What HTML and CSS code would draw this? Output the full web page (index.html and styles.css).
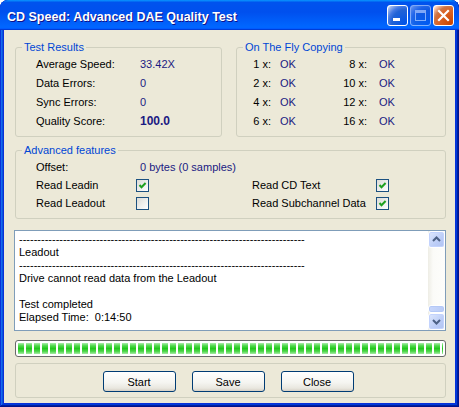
FILE: index.html
```html
<!DOCTYPE html>
<html>
<head>
<meta charset="utf-8">
<title>CD Speed: Advanced DAE Quality Test</title>
<link rel="stylesheet" href="styles.css">
</head>
<body>
<div class="window">
  <div class="titlebar">
    <span class="title">CD Speed: Advanced DAE Quality Test</span>
    <div class="tb-buttons">
      <span class="tb-btn tb-min"><span class="min-bar"></span></span>
      <span class="tb-btn tb-max"><span class="max-box"></span></span>
      <span class="tb-btn tb-close">
        <svg width="19" height="19" viewBox="0 0 19 19"><path d="M5 5 L14 14 M14 5 L5 14" stroke="#fff" stroke-width="2.2" stroke-linecap="square"/></svg>
      </span>
    </div>
  </div>
  <div class="client">
    <div class="top-groups">
      <fieldset class="group results">
        <legend>Test Results</legend>
        <div class="results-grid">
          <span>Average Speed:</span><span class="val">33.42X</span>
          <span>Data Errors:</span><span class="val">0</span>
          <span>Sync Errors:</span><span class="val">0</span>
          <span>Quality Score:</span><span class="val score">100.0</span>
        </div>
      </fieldset>
      <fieldset class="group fly">
        <legend>On The Fly Copying</legend>
        <div class="fly-grid">
          <span class="fx">1 x:</span><span class="val ok1">OK</span><span class="fx">8 x:</span><span class="val ok2">OK</span>
          <span class="fx">2 x:</span><span class="val ok1">OK</span><span class="fx">10 x:</span><span class="val ok2">OK</span>
          <span class="fx">4 x:</span><span class="val ok1">OK</span><span class="fx">12 x:</span><span class="val ok2">OK</span>
          <span class="fx">6 x:</span><span class="val ok1">OK</span><span class="fx">16 x:</span><span class="val ok2">OK</span>
        </div>
      </fieldset>
    </div>
    <fieldset class="group advanced">
      <legend>Advanced features</legend>
      <div class="adv-grid">
        <span>Offset:</span><span class="val offset">0 bytes (0 samples)</span>
        <span>Read Leadin</span>
        <span class="cb"><svg width="11" height="11" viewBox="0 0 11 11"><path d="M2.5 5 L4.5 7.2 L8.6 3" fill="none" stroke="#21a121" stroke-width="2"/></svg></span>
        <span>Read CD Text</span>
        <span class="cb"><svg width="11" height="11" viewBox="0 0 11 11"><path d="M2.5 5 L4.5 7.2 L8.6 3" fill="none" stroke="#21a121" stroke-width="2"/></svg></span>
        <span>Read Leadout</span>
        <span class="cb"></span>
        <span>Read Subchannel Data</span>
        <span class="cb"><svg width="11" height="11" viewBox="0 0 11 11"><path d="M2.5 5 L4.5 7.2 L8.6 3" fill="none" stroke="#21a121" stroke-width="2"/></svg></span>
      </div>
    </fieldset>
    <div class="log">
      <div class="log-text">
        <div class="line">------------------------------------------------------------------------------</div>
        <div class="line">Leadout</div>
        <div class="line">------------------------------------------------------------------------------</div>
        <div class="line">Drive cannot read data from the Leadout</div>
        <div class="line">&nbsp;</div>
        <div class="line">Test completed</div>
        <div class="line">Elapsed Time:  0:14:50</div>
      </div>
      <div class="scrollbar">
        <span class="sb-btn"><svg width="15" height="15" viewBox="0 0 15 15"><path d="M4 9 L7.5 5.5 L11 9" fill="none" stroke="#4d6185" stroke-width="2"/></svg></span>
        <span class="sb-track"><span class="sb-thumb"></span></span>
        <span class="sb-btn"><svg width="15" height="15" viewBox="0 0 15 15"><path d="M4 6 L7.5 9.5 L11 6" fill="none" stroke="#4d6185" stroke-width="2"/></svg></span>
      </div>
    </div>
    <div class="progress"><div class="progress-fill"></div></div>
    <div class="actions">
      <button class="btn">Start</button>
      <button class="btn">Save</button>
      <button class="btn">Close</button>
    </div>
  </div>
</div>
</body>
</html>
```
FILE: styles.css
```css
* { box-sizing: border-box; }
html, body { margin: 0; padding: 0; background: #ffffff; }
body { font-family: "Liberation Sans", Arial, sans-serif; font-size: 11px; color: #000; }

.window {
  width: 459px; height: 407px;
  display: flex; flex-direction: column;
  background: #0831d9;
  border-radius: 8px 8px 0 0;
  overflow: hidden;
  box-shadow: inset -1px -1px #00138c, inset 1px 1px #0831d9, inset -2px -2px #001ea0, inset 2px 2px #166aee, inset -3px -3px #003bda, inset 3px 3px #0855dd;
}

.titlebar {
  height: 30px; flex: none;
  display: flex; align-items: center; justify-content: space-between;
  padding: 0 5px 0 7px;
  background: linear-gradient(180deg, #0997ff, #0053ee 8%, #0050ee 40%, #0066ff 88%, #0066ff 93%, #005bff 95%, #003dd7 96%, #003dd7);
  border-radius: 8px 8px 0 0;
}
.title {
  color: #fff; font-weight: bold; font-size: 12.5px;
  text-shadow: 1px 1px #0f1089;
  padding-top: 3px;
}
.tb-buttons { display: flex; gap: 2px; padding-top: 1px; }
.tb-btn {
  width: 21px; height: 21px;
  border: 1px solid #fff; border-radius: 3px;
  display: flex;
}
.tb-min, .tb-max {
  background: radial-gradient(circle at 90% 90%, #0054e9 0%, #2263d5 55%, #4479e4 70%, #a3bbec 90%, #ffffff 100%);
}
.tb-min { align-items: flex-end; padding: 0 0 4px 5px; }
.min-bar { width: 7px; height: 3px; background: #fff; }
.tb-max { opacity: 0.5; align-items: center; justify-content: center; }
.max-box { width: 11px; height: 11px; border: 1px solid #fff; border-top-width: 3px; }
.tb-close {
  background: radial-gradient(circle at 90% 90%, #cc4600 0%, #dc6527 55%, #cd7546 70%, #ffccb2 90%, #ffffff 100%);
  align-items: center; justify-content: center;
}

.client {
  flex: 1;
  margin: 0 4px 4px;
  background: #ece9d8;
  padding: 11px 9px 5px 11px;
  display: flex; flex-direction: column;
}

.group {
  margin: 0; padding: 0 0 6px 0;
  border: 1px solid #d0d0bf; border-radius: 3px;
  min-width: 0;
}
.group legend {
  margin-left: 6px; padding: 0 2px;
  color: #0046d5; line-height: 13px;
}
.val { color: #1a1a82; }

.top-groups { display: flex; gap: 14px; }
.results { width: 207px; flex: none; }
.fly { flex: 1; }

.results-grid {
  display: grid;
  grid-template-columns: 104px auto;
  grid-auto-rows: 19px;
  align-items: center;
  padding-left: 20px;
}
.score { font-weight: bold; font-size: 12px; }

.fly-grid {
  display: grid;
  grid-template-columns: 34px 66px 30px auto;
  grid-auto-rows: 19px;
  align-items: center;
}
.fx { text-align: right; white-space: nowrap; }
.ok1 { padding-left: 9px; }
.ok2 { padding-left: 12px; }

.advanced { margin-top: 7px; }
.adv-grid {
  display: grid;
  grid-template-columns: 100px 116px 124px 13px;
  grid-template-rows: 19px 18px 18px;
  align-items: center;
  padding-left: 20px;
}
.offset { grid-column: 2 / span 3; padding-left: 4px; }
.cb {
  width: 13px; height: 13px;
  border: 1px solid #1c5180;
  background: linear-gradient(135deg, #dcdcd7, #ffffff);
  display: flex;
}

.log {
  margin-top: 11px; margin-left: -1px;
  height: 101px; flex: none;
  border: 1px solid #7f9db9;
  background: #fff;
  display: flex;
}
.log-text {
  flex: 1; min-width: 0;
  padding: 2px 0 0 4px;
  line-height: 13px;
  overflow: hidden;
}
.line { white-space: pre; height: 13px; }
.scrollbar {
  width: 17px; flex: none;
  display: flex; flex-direction: column;
  background: linear-gradient(90deg, #eeede5, #fbfbf8 30%, #fdfdfb);
}
.sb-btn {
  height: 17px; flex: none;
  border: 1px solid #fff; border-radius: 3px;
  background: linear-gradient(135deg, #dfe8fd, #bccdf7 60%, #b0c3f2);
  box-shadow: inset 0 0 0 1px #c3d3fd;
  display: flex; align-items: center; justify-content: center;
}
.sb-track { flex: 1; display: flex; flex-direction: column; justify-content: flex-end; }
.sb-thumb {
  height: 8px;
  border: 1px solid #fff; border-radius: 3px;
  background: linear-gradient(90deg, #c8d7fc, #b9cbf6);
  box-shadow: inset 0 0 0 1px #b4c8f6;
}

.progress {
  margin-top: 9px;
  height: 17px; flex: none;
  border: 1px solid #686868; border-radius: 3px;
  padding: 2px;
  background: #fff;
}
.progress-fill {
  height: 100%;
  background: linear-gradient(180deg, #acedad 0%, #50d94d 25%, #23c81e 50%, #4ad647 75%, #a8eba7 100%);
  -webkit-mask-image: repeating-linear-gradient(90deg, #000 0 6px, transparent 6px 8px);
  mask-image: repeating-linear-gradient(90deg, #000 0 6px, transparent 6px 8px);
}

.actions {
  margin-top: 6px;
  height: 35px; flex: none;
  border: 1px solid #d0d0bf; border-radius: 3px;
  padding: 7px 5px 5px 0;
  display: flex; justify-content: center; gap: 16px;
}
.btn {
  width: 73px; height: 21px;
  border: 1px solid #003c74; border-radius: 3px;
  background: linear-gradient(180deg, #ffffff, #f5f5f1 55%, #e9e7df 85%, #d6d0c5);
  font-family: "Liberation Sans", Arial, sans-serif; font-size: 11px; color: #000;
  padding: 0;
}
```
